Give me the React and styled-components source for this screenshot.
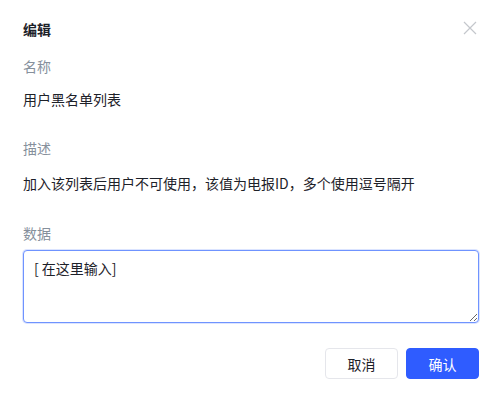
import React from 'react';
import styled, { createGlobalStyle } from 'styled-components';

const GlobalStyle = createGlobalStyle`
  html, body {
    margin: 0;
    background: #fff;
    font-family: "Noto Sans CJK SC", "Noto Sans", "Liberation Sans", sans-serif;
  }
`;

function App() {
  return (
    <>
      <GlobalStyle />
      <Dialog>
        <Header>
          <Title>编辑</Title>
          <CloseButton aria-label="close">
            <svg width="14" height="14" viewBox="0 0 14 14">
              <path d="M1 1 L13 13 M13 1 L1 13" stroke="#c4c7cc" strokeWidth="1.2" fill="none" />
            </svg>
          </CloseButton>
        </Header>

        <Field gap={11} bottom={27}>
          <Label>名称</Label>
          <Value>用户黑名单列表</Value>
        </Field>

        <Field gap={13} bottom={28}>
          <Label>描述</Label>
          <Value>加入该列表后用户不可使用，该值为电报ID，多个使用逗号隔开</Value>
        </Field>

        <Field gap={6} bottom={25}>
          <Label>数据</Label>
          <TextArea defaultValue="[ 在这里输入]" />
        </Field>

        <Footer>
          <Button>取消</Button>
          <Button primary>确认</Button>
        </Footer>
      </Dialog>
    </>
  );
}

export default App;

// Styled Components
const Dialog = styled.div`
  width: 500px;
  box-sizing: border-box;
  padding: 19px 21px 0 23px;
  display: flex;
  flex-direction: column;
`;

const Header = styled.div`
  display: flex;
  align-items: center;
  justify-content: space-between;
  height: 20px;
  margin-bottom: 16px;
`;

const Title = styled.div`
  font-size: 14px;
  font-weight: 700;
  color: #1d2129;
  line-height: 20px;
`;

const CloseButton = styled.button`
  border: none;
  background: none;
  padding: 0;
  margin-right: 2px;
  margin-top: -2px;
  display: flex;
  cursor: pointer;
`;

const Field = styled.div`
  display: flex;
  flex-direction: column;
  gap: ${(props) => props.gap}px;
  margin-bottom: ${(props) => props.bottom}px;
`;

const Label = styled.div`
  font-size: 14px;
  line-height: 22px;
  color: #86909c;
`;

const Value = styled.div`
  font-size: 14px;
  line-height: 22px;
  color: #1d2129;
`;

const TextArea = styled.textarea`
  box-sizing: border-box;
  width: 100%;
  height: 73px;
  padding: 6px 10px;
  border: 1px solid #6f93ff;
  border-radius: 4px;
  box-shadow: 0 0 0 1px rgba(111, 147, 255, 0.25);
  outline: none;
  font-family: inherit;
  font-size: 14px;
  line-height: 22px;
  color: #1d2129;
  resize: vertical;
`;

const Footer = styled.div`
  display: flex;
  justify-content: flex-end;
  gap: 8px;
`;

const Button = styled.button`
  width: 73px;
  height: 31px;
  box-sizing: border-box;
  border-radius: 4px;
  font-family: inherit;
  font-size: 14px;
  cursor: pointer;
  border: 1px solid ${(props) => (props.primary ? '#2f5cff' : '#e5e6eb')};
  background: ${(props) => (props.primary ? '#2f5cff' : '#fff')};
  color: ${(props) => (props.primary ? '#fff' : '#1d2129')};
`;
